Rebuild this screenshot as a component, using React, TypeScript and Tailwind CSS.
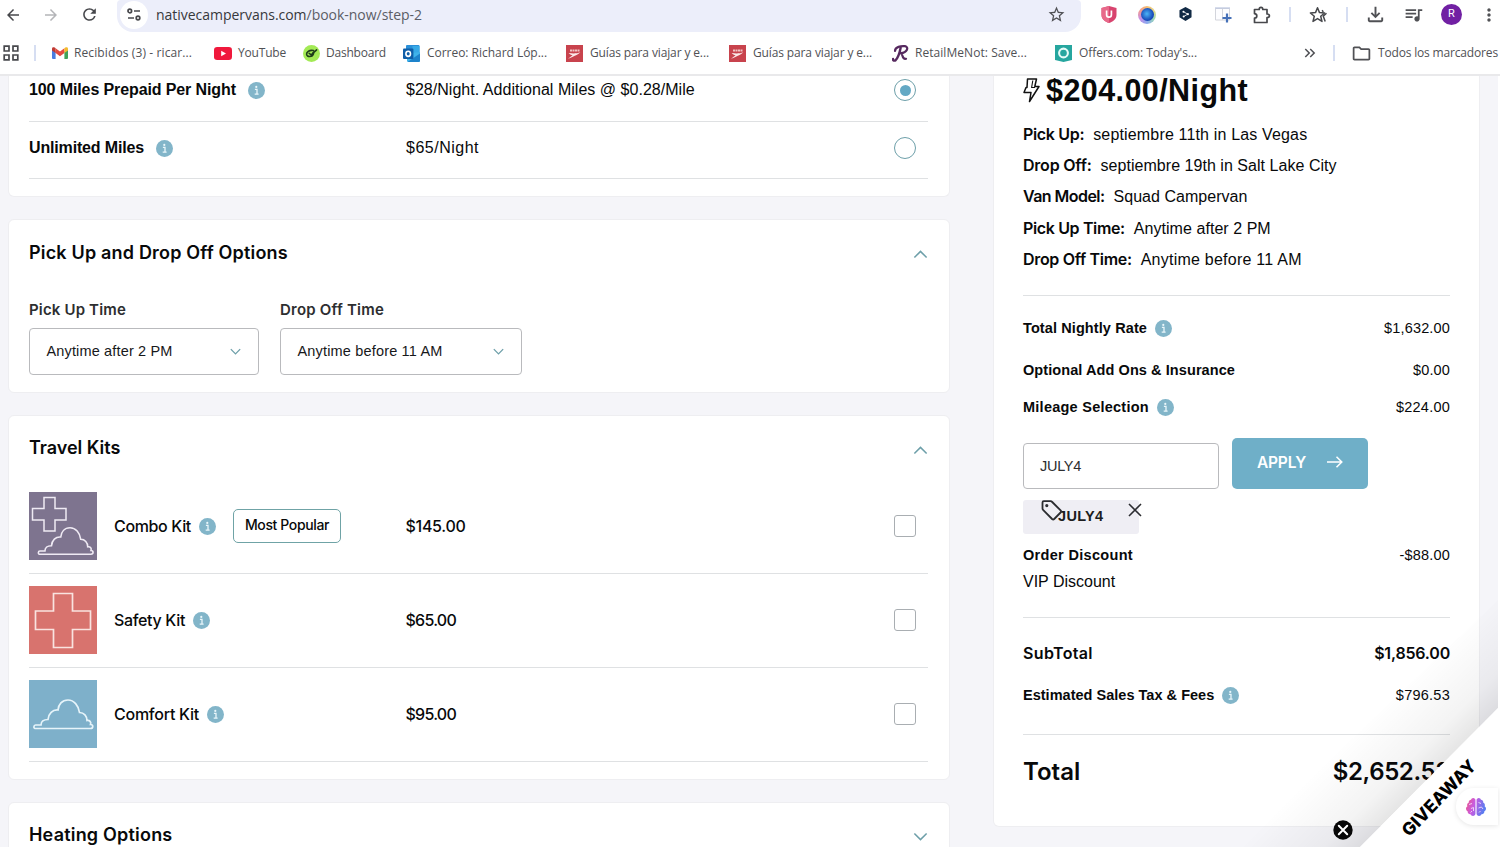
import type { ReactNode } from "react";
import {
  MdArrowBack,
  MdArrowForward,
  MdRefresh,
  MdStarOutline,
  MdOutlineFileDownload,
  MdQueueMusic,
  MdMoreVert,
  MdKeyboardDoubleArrowRight,
  MdOutlineFolder,
} from "react-icons/md";
import { FaBrain } from "react-icons/fa";

function InfoDot() {
  return (
    <svg viewBox="0 0 17 17" className="size-[17px] shrink-0">
      <circle cx="8.5" cy="8.5" r="8.5" fill="#82b5c9" />
      <circle cx="8.3" cy="4.9" r="1.1" fill="#e9f6fa" />
      <path d="M6.9 7.4H9V12M6.7 12.1H10.6" fill="none" stroke="#e9f6fa" strokeWidth="1.3" />
    </svg>
  );
}

function Chevron({ up = false, small = false }: { up?: boolean; small?: boolean }) {
  return (
    <svg viewBox="0 0 16 10" className={small ? "h-[7px] w-[11px]" : "h-[9px] w-[15px]"} fill="none" stroke="#6d9fa9" strokeWidth={small ? 1.9 : 1.7}>
      <path d={up ? "M1.2 8.4L8 1.6L14.8 8.4" : "M1.2 1.6L8 8.4L14.8 1.6"} />
    </svg>
  );
}

/* ---------- Browser chrome ---------- */

function GmailIcon() {
  return (
    <svg viewBox="0 0 16 12" className="h-[12px] w-[16px]">
      <path d="M0 2V11a1 1 0 0 0 1 1H3.6V4.6Z" fill="#4a7de0" />
      <path d="M16 2V11a1 1 0 0 1-1 1H12.4V4.6Z" fill="#3fa35a" />
      <path d="M3.6 1.2V6L8 9.2L12.4 6V1.2L8 4.6Z" fill="#e34b3f" />
      <path d="M0 2A1.7 1.7 0 0 1 2.8 .6L3.6 1.2V6L0 3.4Z" fill="#c03a33" />
      <path d="M16 2A1.7 1.7 0 0 0 13.2 .6L12.4 1.2V6L16 3.4Z" fill="#f3ba2d" />
    </svg>
  );
}

function YouTubeIcon() {
  return (
    <svg viewBox="0 0 18 13" className="h-[13px] w-[18px]">
      <rect width="18" height="13" rx="3.2" fill="#f0183c" />
      <path d="M7.2 3.8L12 6.5L7.2 9.2Z" fill="#fff" />
    </svg>
  );
}

function DashboardIcon() {
  return (
    <svg viewBox="0 0 17 17" className="size-[17px]">
      <circle cx="8.5" cy="8.5" r="8.5" fill="#a3ea55" />
      <path d="M10.4 5.6C6.6 4.6 3.4 7 3.6 9.2C3.8 12.4 9.4 12.4 10.6 8.4M6.2 8.4L8.2 9.8L13.6 4.8" fill="none" stroke="#1f3d1a" strokeWidth="1.6" strokeLinecap="round" />
      <path d="M9 7.8L12.4 5.2L10.2 9.2Z" fill="#1f3d1a" />
    </svg>
  );
}

function OutlookIcon() {
  return (
    <svg viewBox="0 0 17 17" className="size-[17px]">
      <rect x="3" y="0" width="13.5" height="9" rx="1" fill="#2a8fd8" />
      <rect x="9.5" y="1" width="7" height="7" fill="#37a9e6" />
      <path d="M4 8.5L17 7V15.5a1.5 1.5 0 0 1-1.5 1.5H5.5A1.5 1.5 0 0 1 4 15.5Z" fill="#3fb3ea" />
      <path d="M4.5 17L17 8.5V15.5a1.5 1.5 0 0 1-1.5 1.5Z" fill="#1d83cb" />
      <rect x="0" y="3.6" width="10.4" height="10.4" rx="1" fill="#0f5ea8" />
      <ellipse cx="5.2" cy="8.8" rx="2.3" ry="2.6" fill="none" stroke="#fff" strokeWidth="1.6" />
    </svg>
  );
}

function GuideIcon() {
  return (
    <svg viewBox="0 0 17 17" className="size-[17px]">
      <rect width="17" height="17" fill="#c8434d" />
      <path d="M4 5.4H13.5" stroke="#f1c6c6" strokeWidth="2" strokeDasharray="2 .5" />
      <path d="M2.6 8C7 8.6 11 8.6 14.4 7.2C12.4 9.4 10.4 9.9 8.8 10.8C6.8 12 5.2 12.8 2 13.8C4 12.2 5.4 11.2 6.6 10.2C5 10 3.6 9.2 2.6 8Z" fill="#fbeaea" />
    </svg>
  );
}

function RetailIcon() {
  return (
    <svg viewBox="0 0 17 17" className="size-[17px]" fill="none" stroke="#56295f" strokeLinecap="round" strokeLinejoin="round">
      <path d="M8.6 3C7.8 7 6.8 12 3.6 15.2C2.6 16 .8 15.6 1 14" strokeWidth="2.4" />
      <path d="M3 6C3 1.8 9 .8 13 1.2C17 2 15.6 7.4 8.6 8.2C11.4 8.8 9.6 14.8 14 13.8" strokeWidth="2.2" />
    </svg>
  );
}

function OffersIcon() {
  return (
    <svg viewBox="0 0 17 17" className="size-[17px]">
      <path d="M0 0H17V15L8.5 17L0 15Z" fill="#26a69f" />
      <circle cx="8.5" cy="8" r="4.4" fill="none" stroke="#e6fbf8" strokeWidth="2.1" />
    </svg>
  );
}

function Bookmark({ icon, children, className }: { icon: ReactNode; children: ReactNode; className: string }) {
  return (
    <div className={"flex shrink-0 items-center overflow-visible whitespace-nowrap " + className}>
      {icon}
      <span>{children}</span>
    </div>
  );
}

function BrowserBar() {
  return (
    <header className="flex h-[76px] shrink-0 flex-col border-b-2 border-[#e9e9eb] bg-white font-['Open_Sans','Noto_Sans',sans-serif] text-[#505155]">
      <div className="flex h-[32px]">
        <div className="flex h-[29px] w-[117px] items-center pl-[4px]">
          <MdArrowBack className="size-[18px] text-[#47484c]" />
          <MdArrowForward className="ml-[20px] size-[18px] text-[#b4b5b8]" />
          <MdRefresh className="ml-[20px] size-[19px] text-[#47484c]" />
        </div>
        <div className="flex h-[32px] w-[964px] rounded-b-[16px] rounded-t-[4px] bg-[#eceefa] pb-[3px]">
          <div className="flex h-[29px] w-[39px] items-center pl-[3px]">
            <span className="flex size-[28px] items-center justify-center rounded-full bg-white">
              <svg viewBox="0 0 14 13" className="h-[13px] w-[14px]" fill="none" stroke="#47484c" strokeWidth="1.7">
                <circle cx="2.8" cy="3" r="1.8" />
                <path d="M7 3H13M1 10H7" />
                <circle cx="11" cy="10" r="1.8" />
              </svg>
            </span>
          </div>
          <div className="flex h-[29px] flex-1 items-center text-[14px] tracking-[-0.03px] text-[#37383c]">
            <span>nativecampervans.com<span className="text-[#5b5d66]">/book-now/step-2</span></span>
          </div>
          <div className="flex h-[29px] w-[34px] items-center">
            <MdStarOutline className="size-[19px]" />
          </div>
        </div>
        <div className="flex h-[29px] flex-1 items-center">
          <svg viewBox="0 0 16 17" className="ml-[20px] h-[17px] w-[16px] shrink-0">
            <path d="M8 0L15.5 2V9C15.5 13 12 15.6 8 17C4 15.6 .5 13 .5 9V2Z" fill="#d8446f" />
            <path d="M8 0L.5 2V9C.5 13 4 15.6 8 17Z" fill="#e8698a" />
            <path d="M5.6 4.6V8.8A2.4 2.4 0 0 0 10.4 8.8V4.6" fill="none" stroke="#fff" strokeWidth="1.7" />
          </svg>
          <span className="ml-[21px] flex size-[18px] shrink-0 items-center justify-center rounded-full bg-[conic-gradient(#f5bd70,#e6d98a,#9ad8b6,#8ba8ee,#c590e8,#f29a92,#f5bd70)]">
            <span className="size-[13px] rounded-full bg-[radial-gradient(circle_at_45%_45%,#4cb4f5,#1747b8_65%)]" />
          </span>
          <svg viewBox="0 0 14 16" className="ml-[23px] h-[15px] w-[13px] shrink-0">
            <path d="M7 0L13.5 3.5V11L7 15L.5 11V3.5Z" fill="#112a45" />
            <path d="M4.8 5L9.4 7.6L5 10.2" fill="none" stroke="#fff" strokeWidth=".9" />
            <circle cx="4.8" cy="5" r="1.1" fill="#fff" />
            <circle cx="9.6" cy="7.6" r="1.1" fill="#fff" />
            <circle cx="5" cy="10.2" r="1.1" fill="#fff" />
          </svg>
          <svg viewBox="0 0 17 16" className="ml-[23px] h-[16px] w-[17px] shrink-0">
            <path d="M.5 1.5H14.5V13H.5Z" fill="#fdfdff" stroke="#d3d5dc" />
            <path d="M7.5 1.5V13" stroke="#d3d5dc" />
            <path d="M0 1H15" stroke="#bcc6e0" strokeWidth="1.2" />
            <path d="M12 6.5V15.5M7.5 11H16.5" stroke="#4570b8" strokeWidth="2.2" />
          </svg>
          <svg viewBox="0 0 18 18" className="ml-[21px] size-[18px] shrink-0" fill="none" stroke="#47484c" strokeWidth="1.7" strokeLinejoin="round">
            <path d="M1.5 3.5H6.2C6.2 .6 9.8 .6 9.8 3.5H14V8C17.2 8 17.2 11.6 14 11.6V16.5H1.5V12.2C4.6 11.8 4.6 8 1.5 7.7Z" />
          </svg>
          <span className="ml-[18px] h-[15px] w-[2px] shrink-0 bg-[#d6def2]" />
          <svg viewBox="0 0 19 18" className="ml-[18px] h-[18px] w-[19px] shrink-0" fill="none" stroke="#47484c" strokeWidth="1.5" strokeLinejoin="round">
            <path d="M8.5 1.8L10.5 6.6L15.6 7L11.7 10.3L13 15.4L8.5 12.6L4 15.4L5.3 10.3L1.4 7L6.5 6.6Z" />
            <path d="M13.2 4.2L14.2 6M17.5 7.2L14.2 10.1L16.2 15.5" />
          </svg>
          <span className="ml-[18px] h-[15px] w-[2px] shrink-0 bg-[#d6def2]" />
          <MdOutlineFileDownload className="ml-[16px] size-[23px] shrink-0" />
          <MdQueueMusic className="ml-[16px] size-[21px] shrink-0" />
          <span className="ml-[17px] flex size-[21px] shrink-0 items-center justify-center rounded-full bg-[#7120a3] font-['Roboto',sans-serif] text-[11px] text-white">R</span>
          <MdMoreVert className="ml-[17px] size-[20px] shrink-0" />
        </div>
      </div>
      <div className="flex h-[42px] items-center text-[12px]">
        <svg viewBox="0 0 16 16" className="ml-[3px] size-[16px] shrink-0" fill="none" stroke="#47484c" strokeWidth="1.7">
          <path d="M1.2 1.2H6V6H1.2ZM10 1.2H14.8V6H10ZM1.2 10H6V14.8H1.2ZM10 10H14.8V14.8H10Z" />
        </svg>
        <span className="ml-[15px] h-[16px] w-[2px] shrink-0 bg-[#d6def2]" />
        <Bookmark className="ml-[16px] w-[162px] gap-[6px] tracking-[0.11px]" icon={<GmailIcon />}>Recibidos (3) - ricar...</Bookmark>
        <Bookmark className="w-[89px] gap-[6px] tracking-[-0.19px]" icon={<YouTubeIcon />}>YouTube</Bookmark>
        <Bookmark className="w-[100px] gap-[6px] tracking-[-0.22px]" icon={<DashboardIcon />}>Dashboard</Bookmark>
        <Bookmark className="w-[163px] gap-[7px] tracking-[-0.03px]" icon={<OutlookIcon />}>Correo: Richard Lóp...</Bookmark>
        <Bookmark className="w-[163px] gap-[7px] tracking-[-0.13px]" icon={<GuideIcon />}>Guías para viajar y e...</Bookmark>
        <Bookmark className="w-[163px] gap-[7px] tracking-[-0.13px]" icon={<GuideIcon />}>Guías para viajar y e...</Bookmark>
        <Bookmark className="w-[163px] gap-[6px] tracking-[0.05px]" icon={<RetailIcon />}>RetailMeNot: Save...</Bookmark>
        <Bookmark className="w-[246px] gap-[7px] tracking-[-0.09px]" icon={<OffersIcon />}>Offers.com: Today's...</Bookmark>
        <MdKeyboardDoubleArrowRight className="size-[18px] shrink-0" />
        <span className="ml-[14px] h-[16px] w-[2px] shrink-0 bg-[#d6def2]" />
        <MdOutlineFolder className="ml-[16px] size-[21px] shrink-0" />
        <span className="ml-[6px] whitespace-nowrap tracking-[-0.17px]">Todos los marcadores</span>
      </div>
    </header>
  );
}

/* ---------- Left column ---------- */

const card = "rounded-[6px] border border-[#eeeef1] bg-white pl-[20px] pr-[21px] ";

function MileageRow({ label, price, selected, className }: { label: ReactNode; price: ReactNode; selected?: boolean; className: string }) {
  return (
    <div className={"flex items-center border-b border-[#dfe1e3] " + className}>
      <div className="flex w-[377px] items-center gap-[12px] font-bold">
        {label}
        <span className="mt-[2px]"><InfoDot /></span>
      </div>
      <div className="flex-1">{price}</div>
      <span className="mr-[12px] mt-px flex size-[22px] items-center justify-center rounded-full border border-[#6d9fa9]">
        {selected && <span className="size-[11px] rounded-full bg-[#63a8c4]" />}
      </span>
    </div>
  );
}

function SelectBox({ label, value, className }: { label: ReactNode; value: ReactNode; className: string }) {
  return (
    <div className={className}>
      <div className="flex h-[22px] items-center font-['Inter',sans-serif] text-[15px] font-semibold text-[#2d2e30]">{label}</div>
      <div className="mt-[7px] flex h-[47px] items-center justify-between rounded-[4px] border border-[#b9babd] pl-[16.5px] pr-[17px] text-[14.5px] text-[#17181a]">
        {value}
        <Chevron small />
      </div>
    </div>
  );
}

const CLOUD = "M2 40H57.5C60.5 40 60.5 36 57.5 36C58.5 33.5 56.5 31.5 54 32C54 27.5 51 24 46.5 24C45.5 17 41 11.5 35 11.5C29 11.5 25.5 16 25 21.5C19.5 21 15.5 25 15 31C10.5 31 8 33 8 36.5H2.5C.5 36.5 .5 40 2 40Z";

function ComboArt() {
  return (
    <svg viewBox="0 0 68 68" className="size-[68px]" fill="none" stroke="#efeaf4" strokeWidth="1.5">
      <rect width="68" height="68" fill="#7e748f" stroke="none" />
      <path d="M15 5.5H26V16.5H37V28H26V39H15V28H3.5V16.5H15Z" />
      <g transform="translate(8.5 25) scale(.93)"><path d={CLOUD} strokeWidth="1.7" /></g>
    </svg>
  );
}

function SafetyArt() {
  return (
    <svg viewBox="0 0 68 68" className="size-[68px]" fill="none" stroke="#f9e3e0" strokeWidth="1.7">
      <rect width="68" height="68" fill="#d8736e" stroke="none" />
      <path d="M24.5 7.5H43.5V25H61.5V43.5H43.5V61.5H24.5V43.5H6.5V25H24.5Z" />
    </svg>
  );
}

function ComfortArt() {
  return (
    <svg viewBox="0 0 68 68" className="size-[68px]" fill="none" stroke="#e6f4fa" strokeWidth="1.7">
      <rect width="68" height="68" fill="#7eb0ca" stroke="none" />
      <g transform="translate(4 8.5)"><path d={CLOUD} /></g>
    </svg>
  );
}

function KitRow({ art, name, price, badge }: { art: ReactNode; name: ReactNode; price: ReactNode; badge?: ReactNode }) {
  return (
    <div className="flex h-[94px] items-center border-b border-[#dfe1e3] pb-[2px] font-['Inter',sans-serif] text-[16px] font-medium">
      {art}
      <div className="ml-[17px] flex w-[291.5px] items-center gap-[8px]">
        {name}
        <span className="mt-px"><InfoDot /></span>
        {badge}
      </div>
      <div className="flex-1">{price}</div>
      <span className="mr-[12px] size-[22px] rounded-[3px] border border-[#a9aeb2]" />
    </div>
  );
}

/* ---------- Booking summary ---------- */

function Detail({ label, value }: { label: ReactNode; value: ReactNode }) {
  return (
    <div className="flex h-[31.4px] items-center gap-[9px] whitespace-nowrap text-[16px]">
      <span className="pb-[2px] font-['Inter',sans-serif] font-semibold">{label}</span>
      <span>{value}</span>
    </div>
  );
}

function Line({ label, value, info, className }: { label: ReactNode; value: ReactNode; info?: boolean; className: string }) {
  return (
    <div className={"flex items-center justify-between text-[14.5px] " + className}>
      <span className="flex items-center gap-[8px] pt-[2px] font-bold">
        {label}
        {info && <InfoDot />}
      </span>
      <span className="pt-[2px]">{value}</span>
    </div>
  );
}

function Summary() {
  return (
    <aside className="h-[751px] w-[487px] rounded-b-[6px] border border-t-0 border-[#eeeef1] bg-white px-[29px]">
      <div className="flex h-[28px] items-center gap-[6px]">
        <svg viewBox="0 0 17 26" className="h-[26px] w-[17px]" fill="none" stroke="#111" strokeWidth="1.5" strokeLinejoin="round">
          <path d="M4.5 2H13.5L11.8 9.5H16L6.5 24.5L8 15.5H1L3 10.5H4Z" />
          <path d="M9.8 3.5L8.6 10.5H12" strokeWidth="1.1" />
        </svg>
        <span className="pt-px text-[30.5px] font-bold tracking-[0.42px]">$204.00/Night</span>
      </div>
      <div className="mt-[15px]">
        <Detail label={<span className="tracking-[-0.33px]">Pick Up:</span>} value={<span className="tracking-[0.16px]">septiembre 11th in Las Vegas</span>} />
        <Detail label={<span className="tracking-[-0.22px]">Drop Off:</span>} value={<span className="tracking-[0.04px]">septiembre 19th in Salt Lake City</span>} />
        <Detail label={<span className="tracking-[-0.55px]">Van Model:</span>} value={<span className="tracking-[0.04px]">Squad Campervan</span>} />
        <Detail label={<span className="tracking-[-0.36px]">Pick Up Time:</span>} value={<span className="tracking-[0.05px]">Anytime after 2 PM</span>} />
        <Detail label={<span className="tracking-[-0.32px]">Drop Off Time:</span>} value={<span className="tracking-[0.24px]">Anytime before 11 AM</span>} />
      </div>
      <div className="mt-[19px] border-t border-[#dfe1e3] pt-[12px]">
        <Line className="h-[40px]" info label={<span className="tracking-[0.1px]">Total Nightly Rate</span>} value={<span className="tracking-[0.16px]">$1,632.00</span>} />
        <Line className="h-[44px]" label={<span className="tracking-[0.08px]">Optional Add Ons &amp; Insurance</span>} value={<span className="tracking-[0.14px]">$0.00</span>} />
        <Line className="h-[30px]" info label={<span className="tracking-[0.25px]">Mileage Selection</span>} value={<span className="tracking-[0.23px]">$224.00</span>} />
        <div className="mt-[16px] flex h-[51px] items-end gap-[13px]">
          <div className="flex h-[46px] w-[196px] items-center rounded-[4px] border border-[#b9babd] pl-[16px] pt-px text-[14.5px] tracking-[-0.29px] text-[#2d2e30]">JULY4</div>
          <button className="flex h-[51px] w-[136px] items-center justify-between rounded-[5px] bg-[#6fafc8] pb-[2px] pl-[25px] pr-[25px] font-['Inter',sans-serif] text-[15.5px] font-semibold tracking-[-0.21px] text-white">
            APPLY
            <svg viewBox="0 0 16 12" className="h-[12px] w-[16px]" fill="none" stroke="#fff" strokeWidth="1.5">
              <path d="M0 6H15M9.5 .8L14.8 6L9.5 11.2" />
            </svg>
          </button>
        </div>
        <div className="relative mt-[11px] flex h-[34px] w-[116px] items-center rounded-[3px] bg-[#efeef4] pl-[35px] text-[14.5px] font-bold tracking-[0.34px] text-[#1c1d20]">
          JULY4
          <svg viewBox="0 0 22 22" className="absolute left-[17.5px] top-[0.5px] size-[22px]" fill="none" stroke="#2b2c30" strokeWidth="1.8" strokeLinejoin="round">
            <path d="M1.5 2.5Q1.5 1.2 2.8 1.2H9.5Q10.4 1.2 11.2 2L19.6 10.4Q20.6 11.5 19.6 12.5L13.2 19Q12.2 20 11.1 19L2.3 10.2Q1.5 9.4 1.5 8.4Z" />
            <circle cx="5.8" cy="5.6" r=".7" fill="#2b2c30" />
          </svg>
          <svg viewBox="0 0 14 14" className="absolute left-[104.5px] top-[3.5px] size-[14px]" fill="none" stroke="#2b2c30" strokeWidth="1.6">
            <path d="M1 1L13 13M13 1L1 13" />
          </svg>
        </div>
        <Line className="mt-[7px] h-[28px]" label={<span className="tracking-[0.32px]">Order Discount</span>} value={<span className="tracking-[0.2px]">-$88.00</span>} />
        <div className="flex h-[26px] items-center pt-px text-[16px]">VIP Discount</div>
      </div>
      <div className="mt-[22px] border-t border-[#dfe1e3] pt-[16px] pb-[18px]">
        <div className="flex h-[40px] items-center justify-between pb-[2px] font-['Inter',sans-serif] text-[16px] font-semibold">
          <span className="tracking-[0.35px]">SubTotal</span>
          <span className="tracking-[-0.2px]">$1,856.00</span>
        </div>
        <Line className="h-[42px]" info label={<span className="tracking-[0.02px]">Estimated Sales Tax &amp; Fees</span>} value={<span className="tracking-[0.25px]">$796.53</span>} />
      </div>
      <div className="border-t border-[#dfe1e3] pt-[12px]">
        <div className="flex h-[50px] items-center justify-between font-['Inter',sans-serif] text-[24px] font-semibold">
          <span>Total</span>
          <span className="tracking-[-0.4px]">$2,652.53</span>
        </div>
      </div>
    </aside>
  );
}

export default function App() {
  return (
    <div className="relative flex h-[847px] w-[1500px] flex-col overflow-hidden bg-white font-['Liberation_Sans',Arial,sans-serif] text-[#08090a]">
      <BrowserBar />
      <main className="flex w-[1498px] flex-1 gap-[43px] overflow-hidden bg-[#f5f5f9] pl-[8px]">
        <div className="flex h-[900px] w-[942px] flex-col gap-[22px]">
          <section className={card + "h-[121px] shrink-0 rounded-t-none border-t-0 text-[16px]"}>
            <MileageRow className="h-[46px] pb-[18px]" selected label={<span className="tracking-[-0.11px]">100 Miles Prepaid Per Night</span>} price={<span className="tracking-[0.03px]">$28/Night. Additional Miles @ $0.28/Mile</span>} />
            <MileageRow className="h-[57px] pb-[5px]" label={<span className="tracking-[-0.16px]">Unlimited Miles</span>} price={<span className="tracking-[0.5px]">$65/Night</span>} />
          </section>

          <section className={card + "h-[174px] shrink-0"}>
            <div className="flex h-[64px] items-center justify-between">
              <h2 className="font-['Inter',sans-serif] text-[18px] font-semibold tracking-[0.18px]">Pick Up and Drop Off Options</h2>
              <span className="mt-[5px]"><Chevron up /></span>
            </div>
            <div className="mt-[15px] flex gap-[21px]">
              <SelectBox className="w-[230px]" label={<span className="tracking-[0.16px]">Pick Up Time</span>} value={<span className="tracking-[0.15px]">Anytime after 2 PM</span>} />
              <SelectBox className="w-[242px]" label={<span className="tracking-[0.21px]">Drop Off Time</span>} value={<span className="tracking-[0.17px]">Anytime before 11 AM</span>} />
            </div>
          </section>

          <section className={card + "h-[365px] shrink-0"}>
            <div className="flex h-[64px] items-center justify-between pb-[1px]">
              <h2 className="font-['Inter',sans-serif] text-[18px] font-semibold tracking-[-0.03px]">Travel Kits</h2>
              <span className="mt-[6px]"><Chevron up /></span>
            </div>
            <KitRow
              art={<ComboArt />}
              name={<span className="tracking-[-0.35px]">Combo Kit</span>}
              price={<span className="tracking-[-0.29px]">$145.00</span>}
              badge={<span className="ml-[9px] flex h-[34px] w-[108px] items-center justify-center rounded-[5px] border border-[#6fa3a6] pb-[3px] text-[14px] tracking-[-0.38px]">Most Popular</span>}
            />
            <KitRow art={<SafetyArt />} name={<span className="tracking-[-0.34px]">Safety Kit</span>} price={<span className="tracking-[-0.75px]">$65.00</span>} />
            <KitRow art={<ComfortArt />} name={<span className="tracking-[-0.25px]">Comfort Kit</span>} price={<span className="tracking-[-0.75px]">$95.00</span>} />
          </section>

          <section className={card + "h-[90px] shrink-0"}>
            <div className="flex h-[64px] items-center justify-between pb-[1px]">
              <h2 className="font-['Inter',sans-serif] text-[18px] font-semibold tracking-[0.2px]">Heating Options</h2>
              <span className="mt-[4px]"><Chevron /></span>
            </div>
          </section>
        </div>
        <Summary />
      </main>

      {/* Corner ribbon and floating buttons */}
      <svg viewBox="0 0 260 247" className="pointer-events-none absolute bottom-0 right-[2px] h-[247px] w-[260px]">
        <defs>
          <linearGradient id="fold" gradientUnits="userSpaceOnUse" x1="191" y1="177" x2="131" y2="117">
            <stop offset="0" stopColor="#000" stopOpacity=".1" />
            <stop offset=".3" stopColor="#000" stopOpacity=".045" />
            <stop offset="1" stopColor="#000" stopOpacity="0" />
          </linearGradient>
          <linearGradient id="brain" x1="0" y1="0" x2="1" y2="0.3">
            <stop offset="0" stopColor="#f0567f" />
            <stop offset=".45" stopColor="#c95be0" />
            <stop offset="1" stopColor="#5b7cf0" />
          </linearGradient>
        </defs>
        <path d="M122 247L260 108V0L0 247Z" fill="url(#fold)" />
        <path d="M122 247L260 108V247Z" fill="#fff" />
      </svg>
      <div className="absolute left-[1379px] top-[786px] flex h-[24px] w-[120px] -rotate-[46deg] items-center justify-center whitespace-nowrap font-['Inter',sans-serif] text-[17.5px] font-extrabold tracking-[0.2px] text-black">GIVEAWAY</div>
      <div className="absolute right-[2px] top-[788px] flex h-[37px] w-[42px] items-center rounded-l-[18px] bg-white pl-[10px] shadow-[0_1px_5px_rgba(0,0,0,0.1)]">
        <svg viewBox="0 0 20 20" className="size-[20px]">
          <FaBrain size={20} fill="url(#brain)" />
          <path d="M3 7.5L6 6.5M5 11.5L7.5 10.5V14M4.5 15.5L6 14M12.5 5.5L15 6.5M12.5 11L15.5 10L17 12M13 15.5L14.5 14" fill="none" stroke="#f3dcf8" strokeWidth=".9" />
        </svg>
      </div>
      <svg viewBox="0 0 20 20" className="absolute left-[1333px] top-[820px] size-[20px]">
        <circle cx="10" cy="10" r="9.7" fill="#070707" />
        <path d="M5.8 5.8L14.2 14.2M14.2 5.8L5.8 14.2" stroke="#fff" strokeWidth="2" strokeLinecap="round" />
      </svg>
    </div>
  );
}
